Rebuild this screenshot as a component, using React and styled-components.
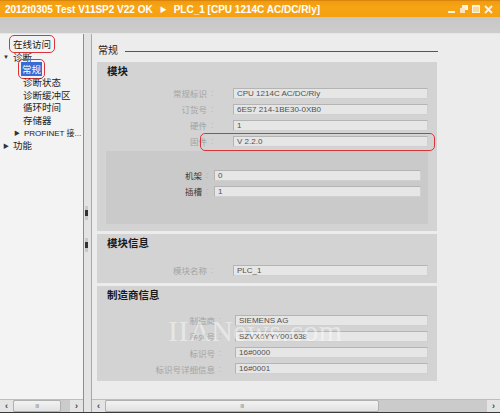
import React from 'react';
import styled, { createGlobalStyle } from 'styled-components';

const CJK = `"Liberation Sans", "Noto Sans CJK SC", sans-serif`;

const GlobalStyle = createGlobalStyle`
  html, body { margin: 0; padding: 0; background: #ececec; }
  body { font-family: ${CJK}; }
`;

const Window = styled.div`
  width: 500px;
  height: 413px;
  display: flex;
  flex-direction: column;
  overflow: hidden;
  background: #ececec;
  border-bottom: 1px solid #3a3a3a;
  box-sizing: border-box;
`;

const TitleBar = styled.div`
  height: 17px;
  flex: none;
  display: flex;
  align-items: center;
  justify-content: space-between;
  padding: 0 5px 0 5px;
  background: linear-gradient(#f09a12, #f7a515 40%, #f5a010);
  border-top: 1px solid #d9860a;
  box-sizing: border-box;
`;

const TitleText = styled.span`
  color: #fff;
  font-weight: bold;
  font-size: 10px;
  white-space: nowrap;
`;

const Arrow = styled.span`
  font-size: 7px;
  margin: 0 7px;
  position: relative;
  top: -1px;
`;

const Controls = styled.div`
  display: flex;
  align-items: center;
  gap: 4px;
  margin-right: 2px;
`;

const Toolbar = styled.div`
  height: 16px;
  flex: none;
  background: linear-gradient(#c6c6c6, #cdcdcd);
  border-bottom: 1px solid #e6e6e6;
`;

const Main = styled.div`
  flex: 1;
  display: flex;
  min-height: 0;
`;

const LeftPane = styled.div`
  width: 83px;
  flex: none;
  display: flex;
  flex-direction: column;
  background: #f3f3f3;
`;

const Tree = styled.div`
  flex: 1;
  padding-top: 4px;
  font-size: 9.5px;
  color: #222;
`;

const TreeRow = styled.div`
  height: 12.6px;
  display: flex;
  align-items: center;
  padding-left: ${p => p.$indent}px;
  white-space: nowrap;
`;

const Caret = styled.span`
  width: 9px;
  font-size: 6px;
  color: #333;
  flex: none;
`;

const TreeLabel = styled.span`
  position: relative;
  padding: 0 1px;
  font-size: ${p => (p.$small ? '8px' : 'inherit')};
  ${p => p.$selected && `
    background: #3a6ad4;
    color: #fff;
  `}
`;

const Marker = styled.span`
  position: absolute;
  left: ${p => p.$l}px;
  right: ${p => p.$r}px;
  top: ${p => p.$t}px;
  bottom: ${p => p.$b}px;
  border: 1.5px solid #d8343a;
  border-radius: 5px;
  pointer-events: none;
`;

const Splitter = styled.div`
  width: 9px;
  flex: none;
  background: #e3e3e3;
  border-left: 1px solid #8e8e8e;
  border-right: 1px solid #a8a8a8;
  box-sizing: border-box;
  display: flex;
  flex-direction: column;
  align-items: flex-start;
  padding-top: 172px;
  gap: 18px;
`;

const Grip = styled.div`
  width: 3px;
  height: 6px;
  margin-left: 1px;
  background: #333;
  border-top: 4px solid #c9c9c9;
  border-bottom: 4px solid #c9c9c9;
`;

const RightPane = styled.div`
  flex: 1;
  display: flex;
  flex-direction: column;
  min-width: 0;
  background: #ececec;
`;

const Content = styled.div`
  flex: 1;
  position: relative;
  padding: 8px 0 0 5px;
`;

const PageHead = styled.div`
  width: 340px;
  display: flex;
  align-items: center;
  gap: 7px;
  font-size: 10px;
  color: #222;
  margin-bottom: 5px;
  padding-left: 1px;
  &::after {
    content: '';
    flex: 1;
    height: 1px;
    background: #555;
    margin-top: 4px;
  }
`;

const Sections = styled.div`
  width: 340px;
  display: flex;
  flex-direction: column;
  gap: 3px;
`;

const Section = styled.div`
  background: #d3d3d3;
  padding: 2px 9px ${p => p.$pb}px 0;
`;

const SectionTitle = styled.div`
  font-weight: bold;
  font-size: 10.5px;
  color: #1a1a1a;
  padding-left: 10px;
  height: 15px;
  line-height: 15px;
  margin-bottom: ${p => p.$mb}px;
`;

const Fields = styled.div`
  display: flex;
  flex-direction: column;
  gap: ${p => p.$gap}px;
`;

const Row = styled.div`
  position: relative;
  display: grid;
  grid-template-columns: ${p => p.$label}px ${p => p.$colon}px 1fr;
  align-items: center;
  height: 11px;
  font-size: 8.5px;
`;

const Label = styled.span`
  text-align: right;
  color: ${p => (p.$dark ? '#3a3a3a' : '#a4a4a4')};
  white-space: nowrap;
`;

const Colon = styled.span`
  color: #b5b5b5;
  padding-left: 4px;
`;

const Input = styled.div`
  height: 11px;
  box-sizing: border-box;
  background: #e6e6e6;
  border: 1px solid #b4b4b4;
  border-right-color: #d0d0d0;
  border-bottom-color: #d0d0d0;
  color: #505050;
  font-size: 8px;
  line-height: 9px;
  padding-left: 3px;
  white-space: nowrap;
  overflow: hidden;
`;

const SubBox = styled.div`
  margin: 5px 0 0 9px;
  background: #cacaca;
  padding: 18px 7px 28px 0;
`;

const Watermark = styled.div`
  position: absolute;
  left: 76px;
  top: 280px;
  font-family: "Liberation Serif", serif;
  font-size: 30px;
  color: #ffffff;
  opacity: 0.45;
  pointer-events: none;
  letter-spacing: 0.5px;
`;

const ScrollBar = styled.div`
  height: 13px;
  flex: none;
  display: flex;
  align-items: stretch;
  background: #cbcbcb;
  border-top: 1px solid #bdbdbd;
  box-sizing: border-box;
  font-size: 9px;
  color: #444;
`;

const ScrollBtn = styled.div`
  width: 13px;
  display: flex;
  align-items: center;
  justify-content: center;
  background: #e4e4e4;
  font-weight: bold;
`;

const Thumb = styled.div`
  width: ${p => p.$w}px;
  display: flex;
  align-items: center;
  justify-content: center;
  background: linear-gradient(#f2f2f2, #e2e2e2);
  border: 1px solid #b0b0b0;
  border-radius: 2px;
  box-sizing: border-box;
  font-size: 6px;
  color: #888;
  letter-spacing: -0.5px;
`;

const Track = styled.div`
  flex: 1;
`;

function WinControls() {
  return (
    <Controls>
      <svg width="8" height="8" viewBox="0 0 8 8"><rect x="0" y="6" width="7" height="2" fill="#fff3dc" /></svg>
      <svg width="8" height="8" viewBox="0 0 8 8"><rect x="2" y="0" width="6" height="5" fill="#fff3dc" /><rect x="0" y="3" width="5" height="5" fill="#fde4b8" /></svg>
      <svg width="8" height="8" viewBox="0 0 8 8"><rect x="0" y="0" width="8" height="8" fill="#fff3dc" /><rect x="1" y="2" width="6" height="5" fill="#fbd89a" /></svg>
      <svg width="9" height="9" viewBox="0 0 9 9"><path d="M1 1 L8 8 M8 1 L1 8" stroke="#fff3dc" strokeWidth="1.8" /></svg>
    </Controls>
  );
}

function Field({ label, value, dark, cols = [110, 26], marker }) {
  return (
    <Row $label={cols[0]} $colon={cols[1]}>
      <Label $dark={dark}>{label}</Label>
      <Colon>:</Colon>
      <Input>{value}</Input>
      {marker && <Marker $l={103} $r={-7} $t={-2} $b={-5} />}
    </Row>
  );
}

function Scroll({ thumbW }) {
  return (
    <ScrollBar>
      <ScrollBtn>‹</ScrollBtn>
      <Thumb $w={thumbW}>III</Thumb>
      <Track />
      <ScrollBtn>›</ScrollBtn>
    </ScrollBar>
  );
}

export default function App() {
  return (
    <>
      <GlobalStyle />
      <Window>
        <TitleBar>
          <TitleText>
            2012t0305 Test V11SP2 V22 OK<Arrow>▶</Arrow>PLC_1 [CPU 1214C AC/DC/Rly]
          </TitleText>
          <WinControls />
        </TitleBar>
        <Toolbar />
        <Main>
          <LeftPane>
            <Tree>
              <TreeRow $indent={12}>
                <TreeLabel>在线访问<Marker $l={-3} $r={-3} $t={-2} $b={-2} /></TreeLabel>
              </TreeRow>
              <TreeRow $indent={3}><Caret>▼</Caret><TreeLabel>诊断</TreeLabel></TreeRow>
              <TreeRow $indent={21}>
                <TreeLabel $selected>常规<Marker $l={-3} $r={-3} $t={-3} $b={-3} /></TreeLabel>
              </TreeRow>
              <TreeRow $indent={22}><TreeLabel>诊断状态</TreeLabel></TreeRow>
              <TreeRow $indent={22}><TreeLabel>诊断缓冲区</TreeLabel></TreeRow>
              <TreeRow $indent={22}><TreeLabel>循环时间</TreeLabel></TreeRow>
              <TreeRow $indent={22}><TreeLabel>存储器</TreeLabel></TreeRow>
              <TreeRow $indent={14}><Caret>▶</Caret><TreeLabel $small>PROFINET 接...</TreeLabel></TreeRow>
              <TreeRow $indent={3}><Caret>▶</Caret><TreeLabel>功能</TreeLabel></TreeRow>
            </Tree>
            <Scroll thumbW={48} />
          </LeftPane>
          <Splitter>
            <Grip />
            <Grip />
          </Splitter>
          <RightPane>
            <Content>
              <PageHead>常规</PageHead>
              <Sections>
                <Section $pb={7}>
                  <SectionTitle $mb={8}>模块</SectionTitle>
                  <Fields $gap={5}>
                    <Field label="常规标识" value="CPU 1214C AC/DC/Rly" />
                    <Field label="订货号" value="6ES7 214-1BE30-0XB0" />
                    <Field label="硬件" value="1" />
                    <Field label="固件" value="V 2.2.0" marker />
                  </Fields>
                  <SubBox>
                    <Fields $gap={5}>
                      <Field label="机架" value="0" dark cols={[96, 12]} />
                      <Field label="插槽" value="1" dark cols={[96, 12]} />
                    </Fields>
                  </SubBox>
                </Section>
                <Section $pb={8}>
                  <SectionTitle $mb={13}>模块信息</SectionTitle>
                  <Fields $gap={5}>
                    <Field label="模块名称" value="PLC_1" />
                  </Fields>
                </Section>
                <Section $pb={7}>
                  <SectionTitle $mb={11}>制造商信息</SectionTitle>
                  <Fields $gap={5.3}>
                    <Field label="制造商" value="SIEMENS AG" cols={[118, 20]} />
                    <Field label="序列号" value="SZVX6YYY001638" cols={[118, 20]} />
                    <Field label="标识号" value="16#0000" cols={[118, 20]} />
                    <Field label="标识号详细信息" value="16#0001" cols={[118, 20]} />
                  </Fields>
                </Section>
              </Sections>
              <Watermark>IIANews.com</Watermark>
            </Content>
            <Scroll thumbW={274} />
          </RightPane>
        </Main>
      </Window>
    </>
  );
}
